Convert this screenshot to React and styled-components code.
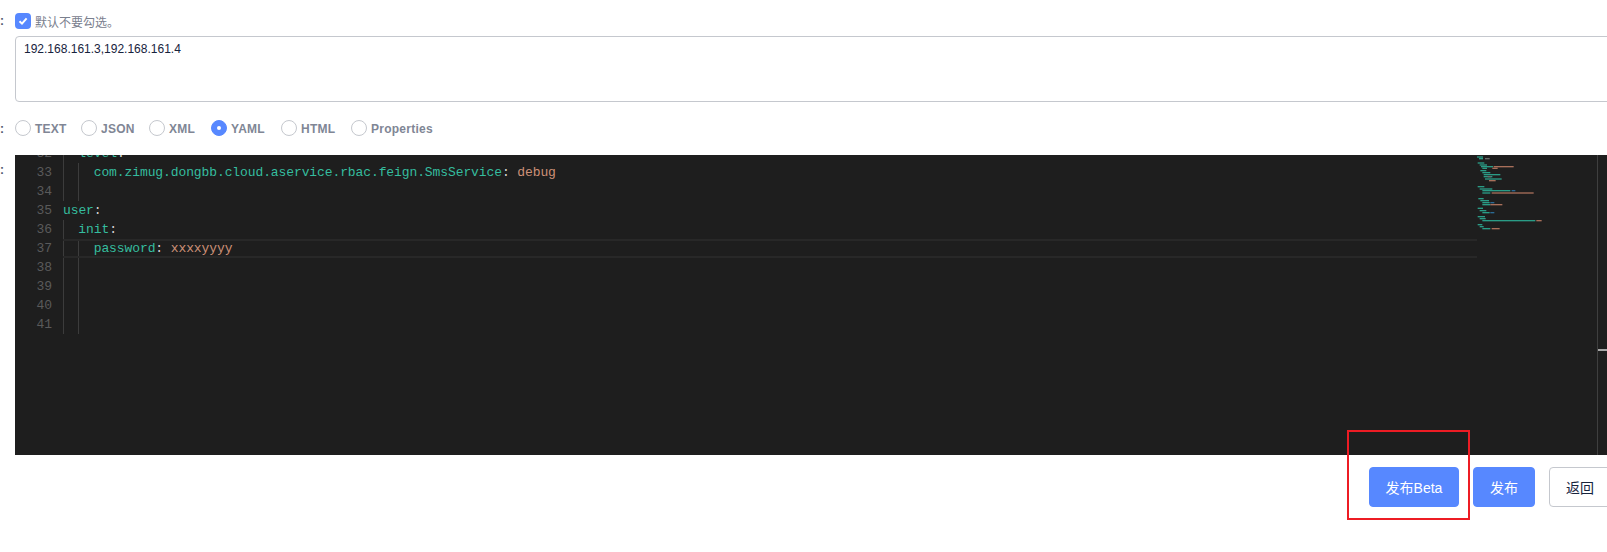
import React from "react";
import styled, { createGlobalStyle } from "styled-components";

const Global = createGlobalStyle`
  html, body { margin: 0; padding: 0; background: #fff; overflow: hidden; }
  body { font-family: "Liberation Sans", "Noto Sans CJK SC", sans-serif; font-size: 12px; }
`;

const Sheet = styled.div`
  position: relative;
  width: 1611px;
  height: 552px;
  padding-top: 13px;
  box-sizing: border-box;
  display: flex;
  flex-direction: column;
`;

const Row = styled.div`
  display: grid;
  grid-template-columns: 15px 1fr;
  margin-top: ${(p) => p.$top || 0}px;
`;

const Colon = styled.span`
  height: 16px;
  font-weight: 700;
  font-size: 12px;
  line-height: ${(p) => p.$h || 16}px;
  color: #515a6e;
`;

const CheckLine = styled.label`
  display: flex;
  align-items: center;
  gap: 4px;
  height: 16px;
  color: #7a808e;
  font-size: 12px;
`;

const CheckBox = styled.span`
  width: 16px;
  height: 16px;
  border-radius: 4px;
  background: #5788ff;
  display: flex;
  align-items: center;
  justify-content: center;
`;

const TextBox = styled.div`
  height: 66px;
  box-sizing: border-box;
  border: 1px solid #c5c8ce;
  border-radius: 4px;
  padding: 5px 8px;
  font-size: 12px;
  line-height: 15px;
  color: #17233d;
`;

const RadioGroup = styled.div`
  display: flex;
  align-items: center;
  height: 16px;
`;

const RadioItem = styled.label`
  display: flex;
  align-items: center;
  gap: 4px;
  width: ${(p) => p.$w}px;
  font-weight: 700;
  font-size: 12px;
  letter-spacing: 0.25px;
  color: #808695;
`;

const RadioText = styled.span`
  margin-top: 2px;
`;

const RadioMark = styled.span`
  width: 16px;
  height: 16px;
  flex: none;
  box-sizing: border-box;
  border-radius: 50%;
  border: 1px solid ${(p) => (p.$on ? "#5788ff" : "#c5c8ce")};
  background: ${(p) => (p.$on ? "#5788ff" : "#fff")};
  display: flex;
  align-items: center;
  justify-content: center;
  &::after {
    content: "";
    display: ${(p) => (p.$on ? "block" : "none")};
    width: 4px;
    height: 4px;
    border-radius: 50%;
    background: #fff;
  }
`;

const Editor = styled.div`
  height: 300px;
  background: #1e1e1e;
  display: flex;
  overflow: hidden;
`;

const CodeArea = styled.div`
  flex: 1;
  min-width: 0;
  margin-top: -11px;
  font-family: "Liberation Mono", monospace;
  font-size: 13px;
  letter-spacing: -0.1px;
`;

const Line = styled.div`
  display: flex;
  height: 19px;
  line-height: 19px;
  white-space: pre;
`;

const LineNo = styled.span`
  width: 37px;
  margin-right: 11px;
  flex: none;
  text-align: right;
  color: #5a5a5a;
`;

const LineBody = styled.div`
  flex: 1;
  display: flex;
  box-sizing: border-box;
  border-top: ${(p) => (p.$active ? "2px solid #282828" : "none")};
  border-bottom: ${(p) => (p.$active ? "2px solid #282828" : "none")};
  line-height: ${(p) => (p.$active ? 15 : 19)}px;
`;

const Guide = styled.span`
  width: 15.36px;
  flex: none;
  box-sizing: border-box;
  border-left: 1px solid #3c3c3c;
`;

const Key = styled.span` color: #35bd9f; `;
const Punct = styled.span` color: #d4d4d4; `;
const Val = styled.span` color: #ce9178; `;

const MiniMap = styled.svg`
  width: 120px;
  height: 300px;
  flex: none;
  display: block;
`;

const Ruler = styled.div`
  width: 13px;
  flex: none;
  border-left: 1px solid #3f3f3f;
  padding-top: 194px;
`;

const RulerMark = styled.div`
  height: 2px;
  background: #a8a8a8;
`;

const Footer = styled.div`
  display: flex;
  justify-content: flex-end;
  gap: 14px;
  margin-top: 12px;
`;

const Btn = styled.button`
  height: 40px;
  width: ${(p) => p.$w}px;
  box-sizing: border-box;
  border-radius: 4px;
  border: 1px solid ${(p) => (p.$primary ? "#5788ff" : "#c5c8ce")};
  background: ${(p) => (p.$primary ? "#5788ff" : "#fff")};
  color: ${(p) => (p.$primary ? "#fff" : "#17233d")};
  font-family: inherit;
  font-size: 14px;
  padding: 0;
`;

const Callout = styled.div`
  position: absolute;
  left: 1347px;
  top: 430px;
  width: 123px;
  height: 90px;
  box-sizing: border-box;
  border: 2px solid #ed1c24;
`;

const radios = [
  ["TEXT", 66],
  ["JSON", 68],
  ["XML", 62],
  ["YAML", 70, true],
  ["HTML", 70],
  ["Properties", 90],
];

const T = "#2a9c86";
const S = "#a86f5a";
const B = "#2b6a94";
const G = "#6b6b6b";
const mini = [
  [19, 20, 38, T], [24, 26, 38, T], [24, 44, 58, G],
  [37, 22, 42, T], [43, 28, 50, T], [48, 32, 68, T], [48, 70, 130, S],
  [53, 36, 50, T], [53, 66, 82, S], [60, 30, 48, T], [66, 36, 60, T],
  [72, 40, 90, T], [78, 40, 66, T], [78, 52, 62, G], [85, 44, 94, T], [90, 56, 76, S],
  [108, 22, 42, T], [115, 28, 66, T], [120, 36, 120, T], [120, 124, 135, B],
  [127, 36, 60, T], [127, 64, 190, S],
  [144, 24, 40, T], [150, 30, 56, T], [156, 36, 58, T], [156, 60, 72, B],
  [162, 36, 60, T], [162, 60, 96, S],
  [173, 22, 38, T], [180, 28, 48, T], [186, 36, 58, T], [186, 60, 72, B],
  [198, 22, 44, T], [204, 28, 46, T], [210, 36, 195, T], [210, 198, 214, S],
  [222, 22, 36, T], [228, 28, 40, T], [234, 36, 60, T], [234, 64, 88, S],
];

const lines = [
  { n: 32, guides: 1, key: "level", colon: true },
  { n: 33, guides: 2, key: "com.zimug.dongbb.cloud.aservice.rbac.feign.SmsService", colon: true, val: "debug" },
  { n: 34, guides: 2 },
  { n: 35, guides: 0, key: "user", colon: true },
  { n: 36, guides: 1, key: "init", colon: true },
  { n: 37, guides: 2, key: "password", colon: true, val: "xxxxyyyy", active: true },
  { n: 38, guides: 2 },
  { n: 39, guides: 2 },
  { n: 40, guides: 2 },
  { n: 41, guides: 2 },
];

export default function App() {
  return (
    <>
      <Global />
      <Sheet>
        <Row>
          <Colon>:</Colon>
          <CheckLine>
            <CheckBox>
              <svg width="12" height="12" viewBox="0 0 12 12" fill="none">
                <path d="M2.5 6.2 L5 8.6 L9.6 3.4" stroke="#fff" strokeWidth="2" />
              </svg>
            </CheckBox>
            默认不要勾选。
          </CheckLine>
        </Row>
        <Row $top={7}>
          <span />
          <TextBox>192.168.161.3,192.168.161.4</TextBox>
        </Row>
        <Row $top={18}>
          <Colon $h={18}>:</Colon>
          <RadioGroup>
            {radios.map(([label, w, on]) => (
              <RadioItem key={label} $w={w}>
                <RadioMark $on={on} />
                <RadioText>{label}</RadioText>
              </RadioItem>
            ))}
          </RadioGroup>
        </Row>
        <Row $top={19}>
          <Colon $h={30}>:</Colon>
          <Editor>
            <CodeArea>
              {lines.map((l) => (
                <Line key={l.n}>
                  <LineNo>{l.n}</LineNo>
                  <LineBody $active={l.active}>
                    {Array.from({ length: l.guides }).map((_, i) => (
                      <Guide key={i} />
                    ))}
                    {l.key && <Key>{l.key}</Key>}
                    {l.colon && <Punct>:</Punct>}
                    {l.val && <Punct> </Punct>}
                    {l.val && <Val>{l.val}</Val>}
                  </LineBody>
                </Line>
              ))}
            </CodeArea>
            <MiniMap viewBox="0 0 360 900">
              {mini.map(([y, x1, x2, c], i) => (
                <rect key={i} x={x1 - 20} y={y - 15} width={x2 - x1} height="4" fill={c} />
              ))}
            </MiniMap>
            <Ruler>
              <RulerMark />
            </Ruler>
          </Editor>
        </Row>
        <Footer>
          <Btn $primary $w={90}>发布Beta</Btn>
          <Btn $primary $w={62}>发布</Btn>
          <Btn $w={62}>返回</Btn>
        </Footer>
        <Callout />
      </Sheet>
    </>
  );
}
